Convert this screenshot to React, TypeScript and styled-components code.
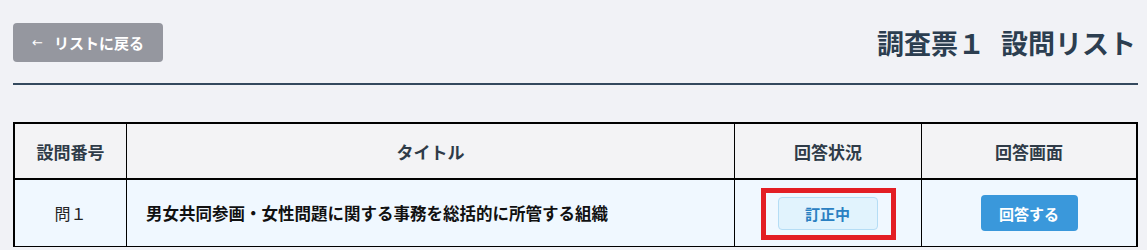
import React from 'react'
import styled, {createGlobalStyle} from 'styled-components'

const GlobalStyle = createGlobalStyle`
    * {
        box-sizing: border-box;
    }
    body {
        margin: 0;
        background: #f1f2f6;
        font-family: "Noto Sans CJK JP", "Noto Sans", sans-serif;
        color: #222;
    }
`

const Page = styled.div`
    padding: 23px 9px 0 13px;
`

const Header = styled.div`
    display: flex;
    align-items: center;
    justify-content: space-between;
    padding-bottom: 21px;
    border-bottom: 2px solid #34495e;
`

const BackButton = styled.button`
    display: flex;
    align-items: center;
    justify-content: center;
    height: 39px;
    width: 150px;
    border: none;
    border-radius: 4px;
    background: #95979f;
    color: #fff;
    font-family: inherit;
    font-size: 15px;
    font-weight: bold;
    cursor: pointer;
`

const Arrow = styled.span`
    font-family: "DejaVu Sans", sans-serif;
    font-weight: normal;
    font-size: 13px;
    margin-right: 11px;
`

const Title = styled.h1`
    display: flex;
    margin: 0 2px 0 0;
    font-size: 27px;
    line-height: 1;
    font-weight: 700;
    color: #2c3e50;
`

const TitleGap = styled.span`
    width: 16px;
`

const Table = styled.table`
    margin-top: 37px;
    width: 1125px;
    table-layout: fixed;
    border-collapse: separate;
    border-spacing: 0;
    border: 2px solid #000;
    border-bottom: none;
`

const HeadCell = styled.th<{ $w: number; $last?: boolean }>`
    width: ${p => p.$w}px;
    height: 56px;
    padding: 0;
    background: #f3f3f5;
    border-bottom: 2px solid #000;
    border-right: ${p => (p.$last ? 'none' : '1px solid #000')};
    font-size: 17px;
    font-weight: bold;
    color: #2f3b48;
    text-align: center;
`

const Cell = styled.td<{ $left?: boolean; $bold?: boolean; $last?: boolean }>`
    height: 67px;
    padding: ${p => (p.$left ? '0 0 0 19px' : '0')};
    background: #f0f8ff;
    border-bottom: 1px solid #000;
    border-right: ${p => (p.$last ? 'none' : '1px solid #000')};
    font-size: ${p => (p.$bold ? '16.5px' : '16px')};
    font-weight: ${p => (p.$bold ? 'bold' : 'normal')};
    color: ${p => (p.$bold ? '#111' : '#222')};
    text-align: ${p => (p.$left ? 'left' : 'center')};
    vertical-align: middle;
`

const Highlight = styled.span`
    display: inline-flex;
    padding: 4px 13px 5px 12px;
    border: 5px solid #e31e24;
    margin-top: 1px;
`

const StatusBadge = styled.span`
    display: inline-flex;
    align-items: center;
    justify-content: center;
    width: 100px;
    height: 33px;
    border: 1px solid #b5ddf5;
    border-radius: 4px;
    background: #e1f3fd;
    color: #2a80c2;
    font-size: 15px;
    font-weight: bold;
`

const AnswerButton = styled.button`
    width: 97px;
    height: 36px;
    border: none;
    border-radius: 4px;
    background: #3a98db;
    color: #fff;
    font-family: inherit;
    font-size: 15px;
    font-weight: bold;
    cursor: pointer;
`

export default function App() {
    return (
        <Page>
            <GlobalStyle/>
            <Header>
                <BackButton><Arrow>←</Arrow>リストに戻る</BackButton>
                <Title>調査票１<TitleGap/>設問リスト</Title>
            </Header>
            <Table>
                <thead>
                <tr>
                    <HeadCell $w={112}>設問番号</HeadCell>
                    <HeadCell $w={608}>タイトル</HeadCell>
                    <HeadCell $w={187}>回答状況</HeadCell>
                    <HeadCell $w={214} $last>回答画面</HeadCell>
                </tr>
                </thead>
                <tbody>
                <tr>
                    <Cell>問１</Cell>
                    <Cell $left $bold>男女共同参画・女性問題に関する事務を総括的に所管する組織</Cell>
                    <Cell>
                        <Highlight>
                            <StatusBadge>訂正中</StatusBadge>
                        </Highlight>
                    </Cell>
                    <Cell $last>
                        <AnswerButton>回答する</AnswerButton>
                    </Cell>
                </tr>
                </tbody>
            </Table>
        </Page>
    )
}
